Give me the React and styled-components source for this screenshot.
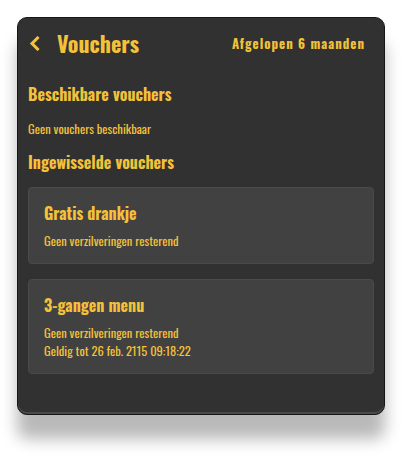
import React from "react";
import styled, { createGlobalStyle } from "styled-components";

const Global = createGlobalStyle`
  html, body { margin: 0; padding: 0; background: #ffffff; }
  body { font-family: "Oswald", "Roboto Condensed", "Open Sans", sans-serif; }
  * { box-sizing: border-box; }
`;

const YELLOW = "#f4c23a";

const Page = styled.div`
  padding: 17px 17px 49px 17px;
`;

const Panel = styled.section`
  width: 368px;
  min-height: 397px;
  background: #313131;
  border: 1px solid #161616;
  border-radius: 10px;
  box-shadow: 0 24px 16px rgba(0, 0, 0, 0.28), inset 0 -2px 0 rgba(255, 255, 255, 0.12);
  padding: 0 10px 40px 10px;
  color: ${YELLOW};
`;

const Header = styled.header`
  height: 52px;
  padding: 1px 9px 4px 0;
  display: flex;
  align-items: center;
  justify-content: space-between;
`;

const TitleGroup = styled.div`
  display: flex;
  align-items: center;
  gap: 17px;
`;

const Back = styled.button`
  border: 0;
  background: none;
  padding: 0;
  margin: 2px 0 0 1px;
  display: flex;
  color: ${YELLOW};
  cursor: pointer;
`;

const Title = styled.h1`
  margin: 0;
  font-size: 22px;
  font-weight: 700;
  line-height: 28px;
`;

const Period = styled.span`
  font-size: 13px;
  font-weight: 700;
  letter-spacing: 1px;
`;

const SectionTitle = styled.h2`
  margin: ${(p) => p.$top}px 0 0 0;
  font-size: 16px;
  line-height: 20px;
  font-weight: 700;
`;

const Note = styled.p`
  margin: 16px 0 0 0;
  font-size: 12.5px;
  line-height: 18px;
  font-weight: 400;
`;

const List = styled.div`
  margin-top: 15px;
  display: flex;
  flex-direction: column;
  gap: 15px;
`;

const Card = styled.article`
  background: #414141;
  border: 1px solid #4a4a4a;
  border-radius: 4px;
  padding: 15px 15px 13px 15px;
`;

const CardTitle = styled.h3`
  margin: 0 0 9px 0;
  font-size: 16px;
  line-height: 20px;
  font-weight: 700;
`;

const CardLine = styled.div`
  font-size: 12.5px;
  line-height: 18px;
  font-weight: 400;
`;

const vouchers = [
  { title: "Gratis drankje", lines: ["Geen verzilveringen resterend"] },
  {
    title: "3-gangen menu",
    lines: ["Geen verzilveringen resterend", "Geldig tot 26 feb. 2115 09:18:22"],
  },
];

export default function App() {
  return (
    <>
      <Global />
      <Page>
        <Panel>
          <Header>
            <TitleGroup>
              <Back aria-label="Terug">
                <svg width="11" height="15" viewBox="0 0 11 15" fill="none">
                  <path d="M8.5 2 L3 7.5 L8.5 13" stroke={YELLOW} strokeWidth="3" strokeLinecap="square" />
                </svg>
              </Back>
              <Title>Vouchers</Title>
            </TitleGroup>
            <Period>Afgelopen 6 maanden</Period>
          </Header>
          <SectionTitle $top={14}>Beschikbare vouchers</SectionTitle>
          <Note>Geen vouchers beschikbaar</Note>
          <SectionTitle $top={14}>Ingewisselde vouchers</SectionTitle>
          <List>
            {vouchers.map((v) => (
              <Card key={v.title}>
                <CardTitle>{v.title}</CardTitle>
                {v.lines.map((l) => (
                  <CardLine key={l}>{l}</CardLine>
                ))}
              </Card>
            ))}
          </List>
        </Panel>
      </Page>
    </>
  );
}
